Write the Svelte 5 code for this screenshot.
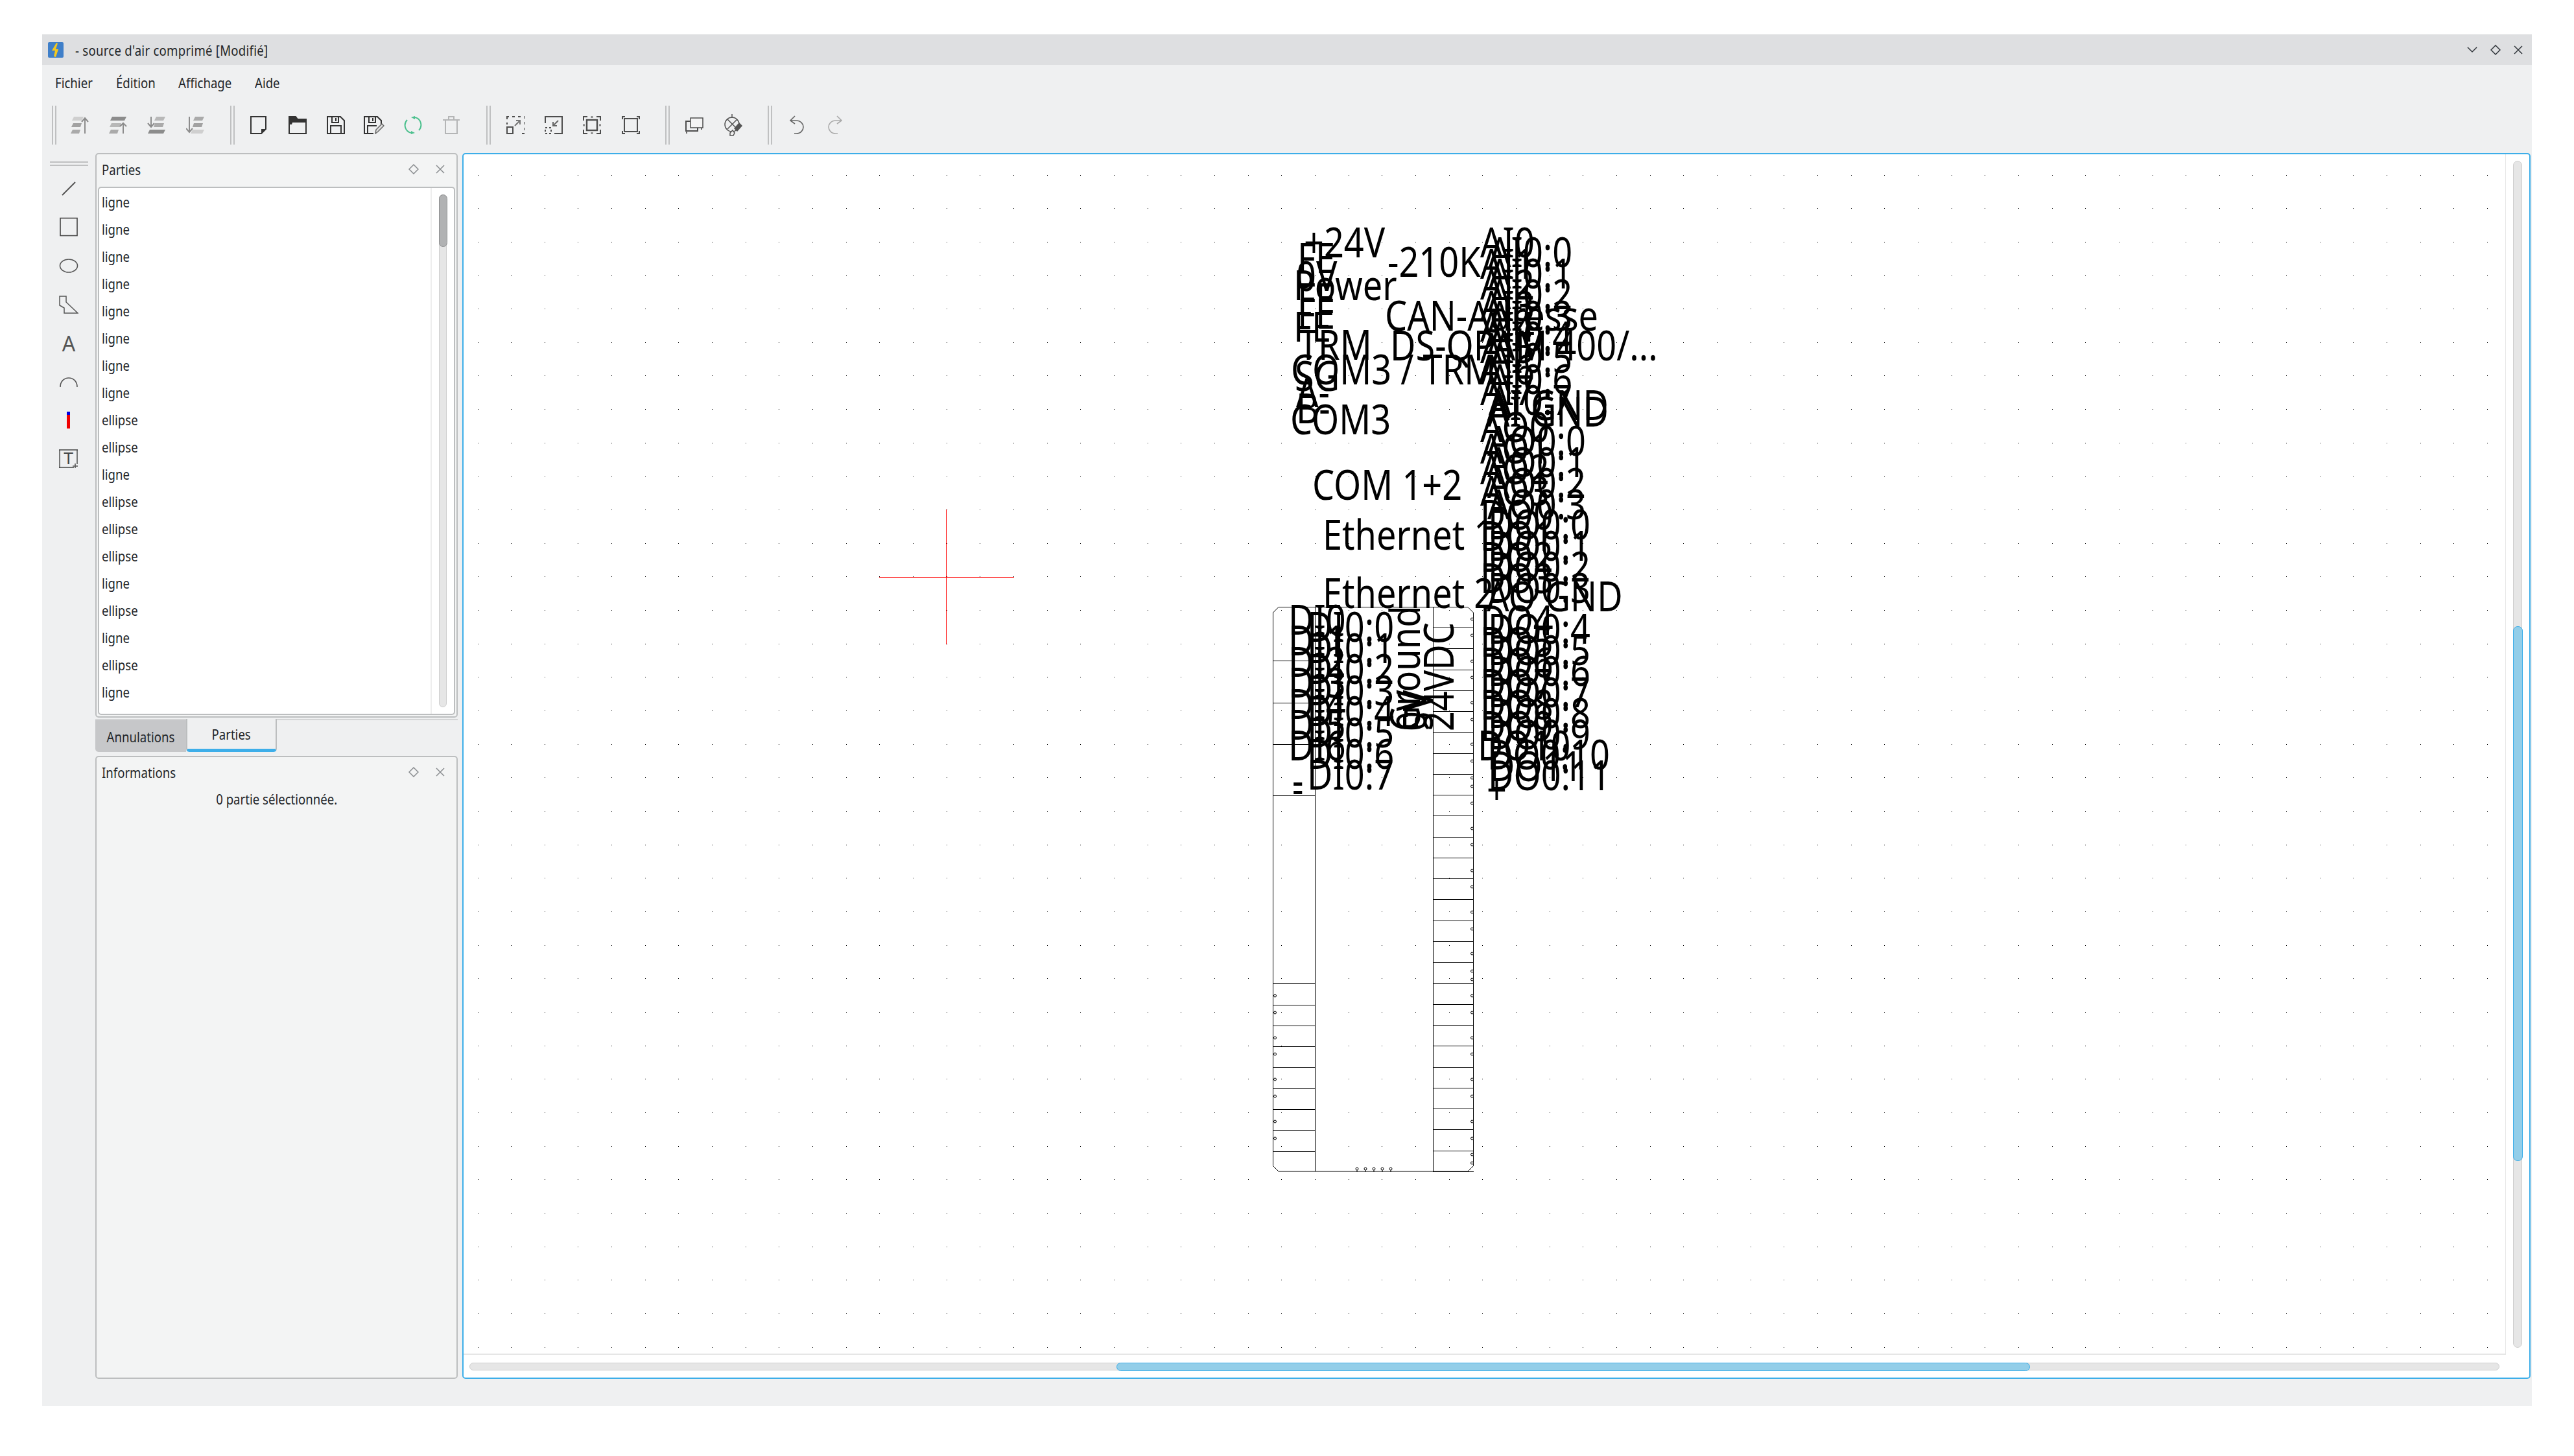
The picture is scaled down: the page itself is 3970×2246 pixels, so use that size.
<script>
  const dotsX = Array.from({ length: 61 }, (_, i) => Math.floor(737 + i * 51.66));
  const dotsY = Array.from({ length: 36 }, (_, i) => Math.floor(270 + i * 51.66));

  const rows = [
    'ligne', 'ligne', 'ligne', 'ligne', 'ligne', 'ligne', 'ligne', 'ligne',
    'ellipse', 'ellipse', 'ligne', 'ellipse', 'ellipse', 'ellipse', 'ligne',
    'ellipse', 'ligne', 'ellipse', 'ligne', 'ellipse'
  ];

  // text blocks of the schematic, [text, x, baseline]
  const labels = [
    ['+24V', 2011, 397], ['-210K', 2140, 427], ['FE', 2001, 421], ['0V', 1999, 449],
    ['Power', 1995, 463], ['FE', 2001, 483], ['FE', 2001, 507], ['FE', 1995, 527],
    ['CAN-Adresse', 2136, 510], ['TRM', 2003, 555], ['DS-QPAM 400/...', 2144, 556],
    ['COM3 / TRM', 1991, 593], ['SG', 1997, 603], ['A-', 1999, 628], ['B-', 1999, 653],
    ['COM3', 1990, 670], ['COM 1+2', 2024, 771], ['Ethernet 1', 2040, 848],
    ['Ethernet 2', 2040, 938], ['AI GND', 2294, 648], ['AI GND', 2294, 658],
    ['AO GND', 2293, 943], ['DO10', 2279, 1173], ['DO0:10', 2294, 1187],
    ['DO11', 2297, 1205], ['DO0:11', 2295, 1219], ['-', 1993, 1227], ['-', 1993, 1240],
    ['+', 2293, 1241]
  ];
  for (let i = 0; i < 8; i++) {
    labels.push(['AI' + i, 2283, 397 + i * 32.6]);
    labels.push(['AI0:' + i, 2296, 412 + i * 32.6]);
    labels.push(['DI0:' + i, 2016, 990 + i * 32.6]);
    if (i < 7) labels.push(['DI' + i, 1987, 979 + i * 32.4]);
  }
  for (let i = 0; i < 4; i++) {
    labels.push(['AO' + i, 2283, 682 + i * 32.6]);
    labels.push(['AO0:' + i, 2294, 703 + i * 32.6]);
    labels.push(['DO' + i, 2283, 817 + i * 32.6]);
    labels.push(['DO0:' + i, 2295, 832 + i * 32.6]);
  }
  for (let i = 0; i < 6; i++) {
    labels.push(['DO' + (i + 4), 2283, 980 + i * 32.6]);
    labels.push(['DO0:' + (i + 4), 2295, 993 + i * 32.6]);
  }
  const rotated = [
    ['Ground', 2190, 1128], ['24VDC', 2242, 1128], ['5V', 2210, 1128], ['0V', 2200, 1128]
  ];

  const rightLines = Array.from({ length: 27 }, (_, k) => 1807 - k * 32.27);
  const leftLines = [1019, 1084, 1148, 1227, ...Array.from({ length: 9 }, (_, k) => 1775.5 - k * 32.27)];
  const rightPins = [955, 980, 1020, 1045, 1084, 1110, 1148, 1174, 1200, 1213, 1239, 1278, 1303, 1343, 1368, 1407, 1433, 1471, 1498, 1511, 1536, 1562, 1601, 1626, 1665, 1691, 1730, 1756, 1781, 1794];
  const leftPins = [1536, 1562, 1601, 1626, 1665, 1691, 1730, 1756];
  const bottomPins = [2093, 2106, 2119, 2132, 2145];
</script>

<div class="page">
  <div class="window">
    <header class="titlebar">
      <svg class="appicon" width="24" height="24" viewBox="0 0 24 24">
        <rect width="24" height="24" rx="2" fill="#3f7fc9" />
        <path d="M13 1 6 13h5l-2 9 3 1 4-12h-4l3-9z" fill="#f4c81e" />
      </svg>
      <span class="title cond">- source d'air comprimé [Modifié]</span>
      <div class="wincontrols">
        <svg width="16" height="10" viewBox="0 0 16 10"><path d="M1 1l7 7 7-7" /></svg>
        <svg width="16" height="16" viewBox="0 0 16 16"><path d="M8 1l7 7-7 7-7-7z" /></svg>
        <svg width="14" height="14" viewBox="0 0 14 14"><path d="M1 1l12 12M13 1L1 13" /></svg>
      </div>
    </header>

    <nav class="menubar">
      <span class="cond">Fichier</span>
      <span class="cond">Édition</span>
      <span class="cond">Affichage</span>
      <span class="cond">Aide</span>
    </nav>

    <div class="toolbar">
      <i class="sep first"></i>
      <button class="tool" aria-label="Raise to top">
        <svg width="28" height="28" viewBox="0 0 28 28">
          <path d="M5 1h15l-3 6H2z" fill="#cfcfcf" /><path d="M4 11h13l-2 6H1z" fill="#a2a2a2" /><path d="M3 21h12l-2 6H0z" fill="#aaa" />
          <path d="M22 27V3M17 9l5-6 5 6" fill="none" stroke="#8c8c8c" stroke-width="2" />
        </svg>
      </button>
      <button class="tool" aria-label="Raise">
        <svg width="28" height="28" viewBox="0 0 28 28">
          <path d="M5 1h22l-3 6H2z" fill="#8c8c8c" /><path d="M4 11h15l-2 6H1z" fill="#b8b8b8" /><path d="M3 21h12l-2 6H0z" fill="#aaa" />
          <path d="M22 27V11M17 16l5-5 5 5" fill="none" stroke="#8c8c8c" stroke-width="2" />
        </svg>
      </button>
      <button class="tool" aria-label="Lower">
        <svg width="28" height="28" viewBox="0 0 28 28">
          <path d="M14 1h14l-3 6H11z" fill="#b8b8b8" /><path d="M12 11h14l-2 6H10z" fill="#aaa" /><path d="M4 21h24l-3 6H1z" fill="#8c8c8c" />
          <path d="M6 1v16M1 11l5 6 5-6" fill="none" stroke="#8c8c8c" stroke-width="2" />
        </svg>
      </button>
      <button class="tool" aria-label="Lower to bottom">
        <svg width="28" height="28" viewBox="0 0 28 28">
          <path d="M14 1h14l-3 6H11z" fill="#aaa" /><path d="M12 11h14l-2 6H10z" fill="#a2a2a2" /><path d="M10 21h18l-3 6H7z" fill="#cfcfcf" />
          <path d="M5 1v24M0 19l5 6 5-6" fill="none" stroke="#8c8c8c" stroke-width="2" />
        </svg>
      </button>
      <i class="sep"></i>
      <button class="tool" aria-label="New">
        <svg width="26" height="28" viewBox="0 0 26 28">
          <path d="M1 1h23v19l-7 7H1z" fill="none" stroke="#333" stroke-width="2" /><path d="M24 20h-7v7z" fill="#333" />
        </svg>
      </button>
      <button class="tool" aria-label="Open">
        <svg width="28" height="28" viewBox="0 0 28 28">
          <path d="M1 1v26h26V5H14l-3-4z" fill="none" stroke="#333" stroke-width="2" /><path d="M1 1h10l3 4h13v5H6l-1 3H1z" fill="#333" />
        </svg>
      </button>
      <button class="tool" aria-label="Save">
        <svg width="28" height="28" viewBox="0 0 28 28">
          <path d="M1 1h20l6 6v20H1z" fill="none" stroke="#333" stroke-width="2" /><path d="M8 1v9h10V1M14 3v5M6 27V15h16v12" fill="none" stroke="#333" stroke-width="2" />
        </svg>
      </button>
      <button class="tool" aria-label="Save as">
        <svg width="32" height="28" viewBox="0 0 32 28">
          <path d="M15 27H1V1h20l6 6v8" fill="none" stroke="#333" stroke-width="2" /><path d="M8 1v9h10V1M14 3v5M6 27V15h14" fill="none" stroke="#333" stroke-width="2" />
          <path d="M18 27l1-6 9-9 3 3-9 9z" fill="#ddd" stroke="#666" stroke-width="1.5" />
        </svg>
      </button>
      <button class="tool" aria-label="Reload">
        <svg width="28" height="30" viewBox="0 0 28 30">
          <path d="M17 3a12 12 0 0 1 6 20M11 27A12 12 0 0 1 5 7" fill="none" stroke="#4cc08e" stroke-width="2" />
          <path d="M11 3l6-2v5zM17 27l-6 2v-5z" fill="#4cc08e" />
        </svg>
      </button>
      <button class="tool" aria-label="Delete">
        <svg width="26" height="28" viewBox="0 0 26 28">
          <path d="M0 6h26M9 6V1h8v5M4 6v21h18V6" fill="none" stroke="#b4b5b6" stroke-width="2" />
        </svg>
      </button>
      <i class="sep"></i>
      <button class="tool" aria-label="Grow selection">
        <svg width="28" height="28" viewBox="0 0 28 28">
          <path d="M0 1h28v26h-5M1 1v12" fill="none" stroke="#4d4d4d" stroke-width="2" stroke-dasharray="4 5" />
          <rect x="1" y="17" width="9" height="10" fill="none" stroke="#4d4d4d" stroke-width="2" />
          <path d="M13 15l8-8M15 7h6v6" fill="none" stroke="#777" stroke-width="2" />
        </svg>
      </button>
      <button class="tool" aria-label="Shrink selection">
        <svg width="28" height="28" viewBox="0 0 28 28">
          <path d="M1 11V1h26v26H15" fill="none" stroke="#4d4d4d" stroke-width="2" />
          <rect x="1" y="18" width="9" height="9" fill="none" stroke="#4d4d4d" stroke-width="2" stroke-dasharray="3 3" />
          <path d="M21 7l-8 8M13 9v6h6" fill="none" stroke="#666" stroke-width="2" />
        </svg>
      </button>
      <button class="tool" aria-label="Fit content">
        <svg width="28" height="28" viewBox="0 0 28 28">
          <path d="M1 7V1h6M21 1h6v6M27 21v6h-6M7 27H1v-6" fill="none" stroke="#4d4d4d" stroke-width="2" />
          <rect x="6" y="6" width="16" height="16" fill="none" stroke="#4d4d4d" stroke-width="2.4" />
          <path d="M14 0v3M14 25v3M0 14h3M25 14h3" stroke="#888" stroke-width="3" />
        </svg>
      </button>
      <button class="tool" aria-label="Fit page">
        <svg width="28" height="28" viewBox="0 0 28 28">
          <path d="M1 5V1h4M23 1h4v4M27 23v4h-4M5 27H1v-4" fill="none" stroke="#4d4d4d" stroke-width="2" />
          <rect x="4" y="4" width="20" height="20" fill="none" stroke="#4d4d4d" stroke-width="2" />
        </svg>
      </button>
      <i class="sep"></i>
      <button class="tool" aria-label="Send to back">
        <svg width="28" height="28" viewBox="0 0 28 28">
          <rect x="8" y="3" width="19" height="15" fill="#f4f4f4" stroke="#4d4d4d" stroke-width="1.5" />
          <path d="M8 8H1v15h18v-5" fill="none" stroke="#4d4d4d" stroke-width="2" />
          <path d="M2 23v4M25 18v3" stroke="#666" stroke-width="2" />
        </svg>
      </button>
      <button class="tool" aria-label="Lamp">
        <svg width="32" height="34" viewBox="0 0 32 34">
          <path d="M14 0v6" stroke="#555" stroke-width="1.5" />
          <circle cx="14" cy="16" r="11" fill="none" stroke="#555" stroke-width="1.5" />
          <path d="M7 8l15 15M22 8L7 23" stroke="#555" stroke-width="1.5" />
          <path d="M25 13l5 5-8 9-5-5z" fill="#555" />
          <path d="M11 29l4-4 3 4-2 4h-5z" fill="#eee" stroke="#555" stroke-width="1.5" />
        </svg>
      </button>
      <i class="sep"></i>
      <button class="tool" aria-label="Undo">
        <svg width="22" height="30" viewBox="0 0 22 30">
          <path d="M8 1L1 8l7 5M1 8h9c7 0 11 5 11 10s-4 10-11 10H7" fill="none" stroke="#666" stroke-width="1.6" />
        </svg>
      </button>
      <button class="tool" aria-label="Redo">
        <svg width="22" height="30" viewBox="0 0 22 30">
          <path d="M14 1l7 7-7 5M21 8h-9C5 8 1 13 1 18s4 10 11 10h3" fill="none" stroke="#aaa" stroke-width="1.6" />
        </svg>
      </button>
    </div>

    <div class="main">
      <aside class="tools">
        <i class="handle"></i>
        <button class="vtool" aria-label="Line">
          <svg width="32" height="32" viewBox="0 0 32 32"><path d="M6 26L26 6" stroke="#555" stroke-width="2" /></svg>
        </button>
        <button class="vtool" aria-label="Rectangle">
          <svg width="30" height="30" viewBox="0 0 30 30"><rect x="2" y="1.5" width="26" height="27" fill="none" stroke="#444" stroke-width="1.6" /></svg>
        </button>
        <button class="vtool" aria-label="Ellipse">
          <svg width="30" height="24" viewBox="0 0 30 24"><ellipse cx="15" cy="12" rx="13.5" ry="10" fill="none" stroke="#555" stroke-width="1.6" /></svg>
        </button>
        <button class="vtool" aria-label="Polygon">
          <svg width="30" height="28" viewBox="0 0 30 28"><path d="M1 1h10v9l18 17H8v-8l-7-4z" fill="none" stroke="#555" stroke-width="1.5" /></svg>
        </button>
        <button class="vtool letter" aria-label="Text">A</button>
        <button class="vtool" aria-label="Arc">
          <svg width="30" height="16" viewBox="0 0 30 16"><path d="M2 16C2 7 8 2 15 2s13 5 13 14" fill="none" stroke="#555" stroke-width="1.6" /></svg>
        </button>
        <button class="vtool" aria-label="Terminal">
          <svg width="6" height="26" viewBox="0 0 6 26"><rect width="5" height="5" fill="#0000e0" /><rect y="5" width="5" height="21" fill="#f00000" /></svg>
        </button>
        <button class="vtool" aria-label="Text field">
          <svg width="32" height="30" viewBox="0 0 32 30">
            <path d="M1 1h29M2 1v28M1 28h23M29 1v22" fill="none" stroke="#444" stroke-width="1.4" />
            <text x="8" y="23" class="tbox">T</text>
            <path d="M26 22v7M22 26h8" stroke="#555" stroke-width="1.6" />
          </svg>
        </button>
      </aside>

      <div class="docks">
        <section class="dock parts">
          <div class="dockhead">
            <span class="cond">Parties</span>
            <div class="dockbtns">
              <svg width="16" height="16" viewBox="0 0 16 16"><path d="M8 1l7 7-7 7-7-7z" /></svg>
              <svg width="14" height="14" viewBox="0 0 14 14"><path d="M1 1l12 12M13 1L1 13" /></svg>
            </div>
          </div>
          <div class="list">
            <div class="rows">
              {#each rows as row}
                <div class="row"><span class="cond">{row}</span></div>
              {/each}
            </div>
            <div class="listbar"><div class="track"><div class="thumb"></div></div></div>
          </div>
        </section>
        <div class="tabs">
          <span class="tab"><span class="cond mid">Annulations</span></span>
          <span class="tab active"><span class="cond mid">Parties</span></span>
        </div>
        <section class="dock info">
          <div class="dockhead">
            <span class="cond">Informations</span>
            <div class="dockbtns">
              <svg width="16" height="16" viewBox="0 0 16 16"><path d="M8 1l7 7-7 7-7-7z" /></svg>
              <svg width="14" height="14" viewBox="0 0 14 14"><path d="M1 1l12 12M13 1L1 13" /></svg>
            </div>
          </div>
          <p><span class="cond mid">0 partie sélectionnée.</span></p>
        </section>
      </div>

      <div class="canvas">
        <div class="viewport">
          <svg class="drawing" width="3150" height="1852" viewBox="715 238 3150 1852">
            {#each dotsY as y}
              {#each dotsX as x}
                <rect {x} {y} width="1" height="1" fill="#000" />
              {/each}
            {/each}

            <path d="M1459.5 786v208M1356 890.5h208" stroke="#f00" stroke-width="1" />

            <path d="M1972 936.5h292l8.5 8.5v853.5l-8.5 8.5h-292l-8.5-8.5v-853.5z" fill="none" stroke="#000" />
            <path d="M2028.5 936v871M2210.5 936v871" stroke="#000" fill="none" />
            {#each rightLines as y}
              <path d="M2210 {Math.round(y) + 0.5}h63" stroke="#000" />
            {/each}
            {#each leftLines as y}
              <path d="M1964 {Math.round(y) + 0.5}h64" stroke="#000" />
            {/each}
            {#each rightPins as y}
              <circle cx="2270.5" cy={y} r="2" fill="#fff" stroke="#000" stroke-width="1" />
            {/each}
            {#each leftPins as y}
              <circle cx="1966.5" cy={y} r="2" fill="#fff" stroke="#000" stroke-width="1" />
            {/each}
            {#each bottomPins as x}
              <circle cx={x} cy="1803" r="2" fill="#fff" stroke="#000" stroke-width="1" />
              <path d="M{x} 1805v3" stroke="#000" />
            {/each}

            {#each labels as [text, x, y]}
              <text class="label" transform="translate({x} {y}) scale(.845 1)">{text}</text>
            {/each}
            {#each rotated as [text, x, y]}
              <text class="label" transform="translate({x} {y}) rotate(-90) scale(.845 1)">{text}</text>
            {/each}
          </svg>
        </div>
        <div class="vbar"><div class="vthumb"></div></div>
        <div class="hbar"><div class="hthumb"></div></div>
      </div>
    </div>
  </div>
</div>

<style>
  :global(body) {
    margin: 0;
    background: #fff;
  }

  .page {
    width: 3970px;
    height: 2246px;
    padding: 53px 65px 0;
    box-sizing: border-box;
    font-family: "Noto Sans", "Open Sans", sans-serif;
    font-size: 22px;
    color: #232629;
  }

  /* the original ui font is a condensed cut, squeeze the regular one */
  .cond {
    display: inline-block;
    white-space: nowrap;
    transform: scaleX(.845);
    transform-origin: left center;
  }

  .cond.mid {
    transform-origin: center;
  }

  .window {
    height: 2116px;
    background: #eff0f1;
    display: flex;
    flex-direction: column;
  }

  .titlebar {
    height: 47px;
    flex: none;
    background: #dedfe1;
    display: flex;
    align-items: center;
    padding: 0 14px 0 9px;
  }

  .appicon {
    flex: none;
  }

  .title {
    margin-left: 18px;
    letter-spacing: .3px;
  }

  .wincontrols {
    margin-left: auto;
    display: flex;
    align-items: center;
    gap: 20px;
  }

  .wincontrols svg path {
    fill: none;
    stroke: #31363b;
    stroke-width: 1.5;
  }

  .menubar {
    height: 51px;
    flex: none;
    display: grid;
    grid-template-columns: 94px 96px 118px auto;
    align-items: center;
    padding: 2px 0 0 20px;
    box-sizing: border-box;
  }

  .menubar span {
    justify-self: start;
  }

  .toolbar {
    height: 85px;
    flex: none;
    display: flex;
    align-items: center;
    padding: 0 0 2px 15px;
    box-sizing: border-box;
  }

  .sep {
    display: block;
    width: 7px;
    height: 60px;
    box-sizing: border-box;
    border-left: 2px solid #bfc0c1;
    border-right: 2px solid #bfc0c1;
    margin: 0 8px 0 24px;
  }

  .sep.first {
    margin: 0 6px 0 0;
  }

  .tool {
    width: 59.4px;
    height: 60px;
    flex: none;
    padding: 0;
    border: none;
    background: none;
    display: flex;
    align-items: center;
    justify-content: center;
  }

  .main {
    flex: 1;
    display: flex;
    padding-bottom: 42px;
    min-height: 0;
  }

  .tools {
    width: 82px;
    flex: none;
    display: flex;
    flex-direction: column;
    align-items: center;
    padding-top: 13px;
    box-sizing: border-box;
  }

  .handle {
    display: block;
    width: 59px;
    height: 7px;
    box-sizing: border-box;
    border-top: 2px solid #bfc0c1;
    border-bottom: 2px solid #bfc0c1;
    margin-bottom: 5px;
  }

  .vtool {
    width: 60px;
    height: 59.6px;
    flex: none;
    padding: 0;
    border: none;
    background: none;
    display: flex;
    align-items: center;
    justify-content: center;
  }

  .letter {
    font-family: "Noto Sans", sans-serif;
    font-size: 32px;
    color: #555;
  }

  .tbox {
    font-size: 25px;
    fill: #444;
  }

  .docks {
    width: 559px;
    flex: none;
    margin-right: 7px;
    display: flex;
    flex-direction: column;
  }

  .dock {
    background: #f3f4f4;
    border: 2px solid #bcbebf;
    border-radius: 5px;
    box-sizing: border-box;
    padding: 0 2px 2px;
    display: flex;
    flex-direction: column;
  }

  .parts {
    height: 871px;
    flex: none;
  }

  .info {
    flex: 1;
    margin-top: 6px;
  }

  .dockhead {
    height: 46px;
    flex: none;
    display: flex;
    align-items: center;
    justify-content: space-between;
    padding: 0 16px 0 6px;
  }

  .dockbtns {
    display: flex;
    align-items: center;
    gap: 26px;
  }

  .dockbtns svg path {
    fill: none;
    stroke: #8a8d90;
    stroke-width: 1.5;
  }

  .list {
    flex: 1;
    min-height: 0;
    margin-top: 4px;
    background: #fff;
    border: 2px solid #bcbebf;
    border-radius: 5px;
    display: flex;
    overflow: hidden;
  }

  .rows {
    flex: 1;
    overflow: hidden;
    padding-left: 4px;
  }

  .row {
    height: 42px;
    line-height: 42px;
  }

  .listbar {
    width: 36px;
    flex: none;
    border-left: 2px solid #eeeeee;
    box-sizing: border-box;
    padding: 10px 11px;
  }

  .track {
    height: 100%;
    background: #e6e6e6;
    border: 1.5px solid #cdcdcd;
    border-radius: 7px;
    box-sizing: border-box;
  }

  .thumb {
    height: 79px;
    margin: -1.5px;
    background: #b1b2b3;
    border: 1.5px solid #8b8c8d;
    border-radius: 7px;
  }

  .tabs {
    height: 51px;
    flex: none;
    margin-top: 2px;
    border-top: 2px solid #d3d4d5;
    box-sizing: border-box;
    display: flex;
  }

  .tab {
    width: 140px;
    height: 49px;
    box-sizing: border-box;
    display: flex;
    align-items: center;
    justify-content: center;
    background: #c6c7c9;
    border-radius: 0 0 0 5px;
  }

  .tab.active {
    background: #eff0f1;
    border-right: 2px solid #bcbebf;
    border-left: 2px solid #bcbebf;
    border-bottom: 5px solid #3daee9;
    border-radius: 0 0 5px 5px;
    margin-top: -2px;
    height: 51px;
  }

  .info p {
    margin: 3px 0 0;
    text-align: center;
  }

  .canvas {
    width: 3190px;
    flex: none;
    background: #fff;
    border: 2px solid #3daee9;
    border-radius: 5px;
    box-sizing: border-box;
    display: grid;
    grid-template-columns: 3150px 1fr;
    grid-template-rows: 1852px 1fr;
    overflow: hidden;
  }

  .viewport {
    border-right: 1px solid #e6e6e6;
    border-bottom: 2px solid #e6e6e6;
    overflow: hidden;
  }

  .drawing {
    display: block;
  }

  .label {
    font-size: 64px;
    fill: #000;
  }

  .vbar {
    margin: 10px 11px 11px;
    background: #e6e6e6;
    border: 1.5px solid #cdcdcd;
    border-radius: 7px;
    padding-top: 717px;
  }

  .vthumb {
    height: 823px;
    margin: 0 -1.5px;
    background: #93cee9;
    border: 1.5px solid #3daee9;
    border-radius: 7px;
  }

  .hbar {
    grid-column: 1;
    margin: 12px 10px 11px 9px;
    background: #e6e6e6;
    border: 1.5px solid #cdcdcd;
    border-radius: 7px;
    padding-left: 997px;
    display: flex;
  }

  .hthumb {
    width: 1407px;
    margin: -1.5px 0;
    background: #93cee9;
    border: 1.5px solid #3daee9;
    border-radius: 7px;
  }
</style>
